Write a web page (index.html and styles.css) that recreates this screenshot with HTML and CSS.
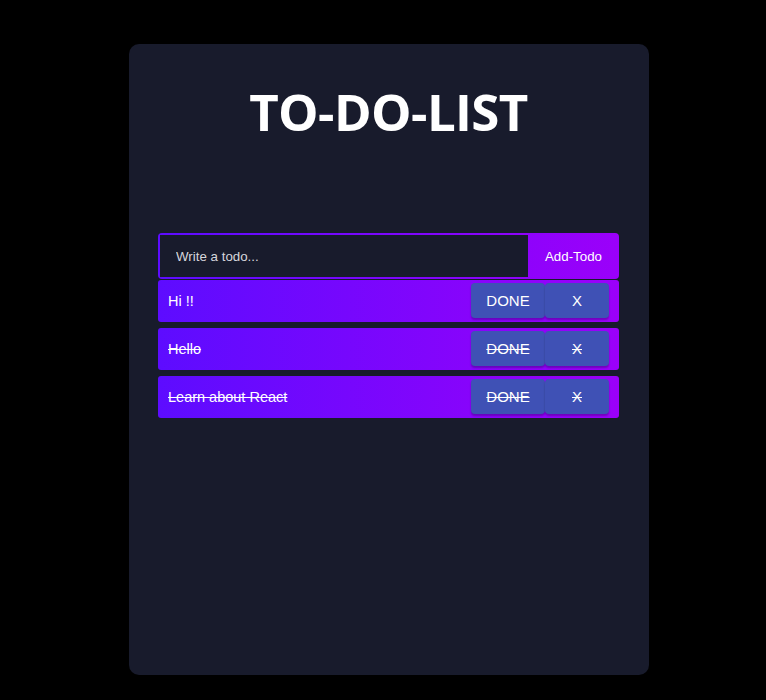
FILE: index.html
```html
<!DOCTYPE html>
<html lang="en">
<head>
<meta charset="utf-8">
<title>TO-DO-LIST</title>
<link rel="stylesheet" href="styles.css">
</head>
<body>
<div class="app">
  <div class="todo-card">
    <h1 class="title">TO-DO-LIST</h1>
    <form class="todo-form">
      <input class="todo-input" type="text" placeholder="Write a todo...">
      <button class="add-btn" type="button">Add-Todo</button>
    </form>
    <ul class="todo-list">
      <li class="todo-item">
        <span class="todo-text">Hi !!</span>
        <div class="todo-actions">
          <button class="act-btn done-btn" type="button">DONE</button>
          <button class="act-btn del-btn" type="button">X</button>
        </div>
      </li>
      <li class="todo-item completed">
        <span class="todo-text">Hello</span>
        <div class="todo-actions">
          <button class="act-btn done-btn" type="button">DONE</button>
          <button class="act-btn del-btn" type="button">X</button>
        </div>
      </li>
      <li class="todo-item completed">
        <span class="todo-text">Learn about React</span>
        <div class="todo-actions">
          <button class="act-btn done-btn" type="button">DONE</button>
          <button class="act-btn del-btn" type="button">X</button>
        </div>
      </li>
    </ul>
  </div>
</div>
</body>
</html>
```
FILE: styles.css
```css
* { box-sizing: border-box; }

html, body {
  margin: 0;
  padding: 0;
  background: #000;
  height: 100%;
}

body {
  font-family: "Liberation Sans", Arial, sans-serif;
  color: #fff;
}

.app {
  display: flex;
  justify-content: center;
  padding: 44px 0 0 12px;
}

.todo-card {
  width: 520px;
  height: 631px;
  background: #181b2c;
  border-radius: 10px;
  padding: 0 30px 0 29px;
}

.title {
  margin: 32px 0 0;
  text-align: center;
  font-family: "Open Sans", "Noto Sans", sans-serif;
  font-weight: 700;
  font-size: 51px;
  letter-spacing: -0.6px;
  line-height: 71px;
  color: #fff;
}

.todo-form {
  display: flex;
  height: 46px;
  margin: 86px 0 1px;
  padding: 2px 0 2px 2px;
  border-radius: 4px;
  background: linear-gradient(90deg, #5d0cff 0%, #9b00fa 100%);
}

.todo-input {
  flex: 1;
  min-width: 0;
  border: none;
  outline: none;
  background: #181b2c;
  color: #fff;
  font-family: "Liberation Sans", Arial, sans-serif;
  font-size: 13.33px;
  padding: 0 16px;
}

.todo-input::placeholder {
  color: #d6d6dc;
}

.add-btn {
  width: 91px;
  border: none;
  background: transparent;
  color: #fff;
  font-family: "Liberation Sans", Arial, sans-serif;
  font-size: 13.33px;
  padding: 0;
  cursor: pointer;
}

.todo-list {
  list-style: none;
  margin: 0;
  padding: 0;
  display: flex;
  flex-direction: column;
  gap: 6px;
}

.todo-item {
  display: flex;
  align-items: center;
  justify-content: space-between;
  height: 42px;
  padding: 0 10px;
  border-radius: 3px;
  background: linear-gradient(90deg, #5d0cff 0%, #9b00fa 100%);
}

.todo-text {
  font-size: 14.5px;
  color: #fff;
}

.todo-actions {
  display: flex;
  align-self: flex-start;
  margin-top: 3px;
}

.act-btn {
  height: 35px;
  border: none;
  border-radius: 4px;
  background: #3f51b5;
  color: #fff;
  font-family: "Liberation Sans", Arial, sans-serif;
  font-size: 15px;
  padding: 0;
  box-shadow: 0 2px 2px rgba(0, 0, 0, 0.25);
  cursor: pointer;
}

.done-btn { width: 74px; }
.del-btn { width: 64px; }

.completed .todo-text,
.completed .act-btn {
  text-decoration: line-through;
}
```
